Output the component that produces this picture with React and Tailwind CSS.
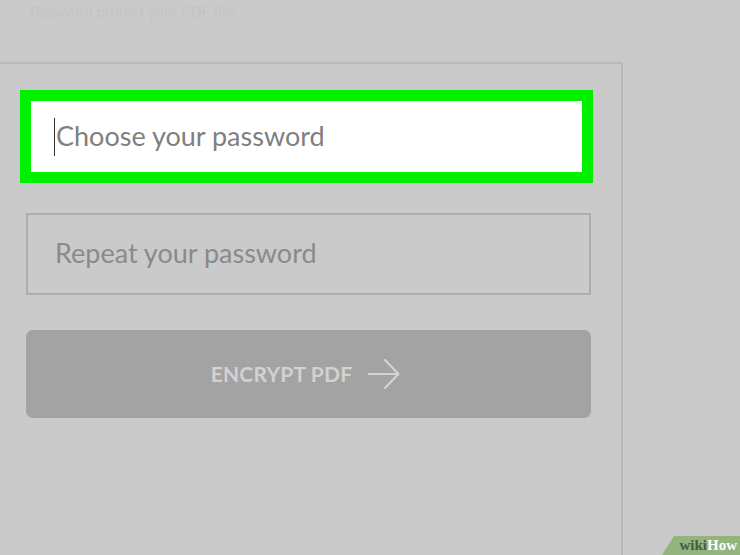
import React from 'react';

const font = { fontFamily: 'Lato, "Open Sans", sans-serif' };

const ArrowRight = () => (
  <svg width="32" height="32" viewBox="0 0 32 32" fill="none" stroke="#d4d4d4" strokeWidth="2.2" strokeLinecap="round" strokeLinejoin="round">
    <path d="M1 16h29" />
    <path d="M17 2l13.5 14L17 30" />
  </svg>
);

const App = () => {
  return (
    <div className="relative w-[740px] h-[555px] bg-[#cacaca] overflow-hidden" style={font}>
      {/* faded heading at the very top */}
      <div className="h-[62px] pl-[30px] pt-[2px] flex flex-col">
        <p className="text-[15px] text-[#c4c4c4] leading-[18px]">Password protect your PDF file</p>
      </div>

      <div className="w-[623px] h-[493px] border-t-2 border-r-2 border-[#b9b9b9] flex flex-col">
        <div className="ml-[20px] mt-[26px] w-[573px] h-[93px] border-[11px] border-[#00f000] bg-white flex items-center pl-[23px]">
          <span className="w-px h-[38px] bg-[#333] mr-[1px]" />
          <span className="text-[27px] text-[#7f7f7f] leading-none pb-[2px]">Choose your password</span>
        </div>

        <div className="ml-[26px] mt-[30px] w-[565px] h-[82px] border-2 border-[#adadad] flex items-center pl-[27px]">
          <span className="text-[27px] text-[#8a8a8a] leading-none pb-[4px]">Repeat your password</span>
        </div>

        <button className="ml-[26px] mt-[35px] w-[565px] h-[88px] rounded-[7px] bg-[#a3a3a3] flex items-center justify-center gap-[16px] pr-[6px]">
          <span className="text-[21px] font-bold text-[#d2d2d2] tracking-[0.2px]">ENCRYPT PDF</span>
          <ArrowRight />
        </button>
      </div>

      {/* wikiHow badge */}
      <div className="absolute right-0 bottom-0 w-[78px] h-[19px] bg-[#93b47c] [clip-path:polygon(12px_0,100%_0,100%_100%,0_100%)] flex items-center justify-end pr-[3px]">
        <span className="text-[15px] font-bold leading-none" style={{ fontFamily: '"Liberation Serif", serif' }}>
          <span className="text-[#4b5a40]">wiki</span>
          <span className="text-white">How</span>
        </span>
      </div>
    </div>
  );
};

export default App;
